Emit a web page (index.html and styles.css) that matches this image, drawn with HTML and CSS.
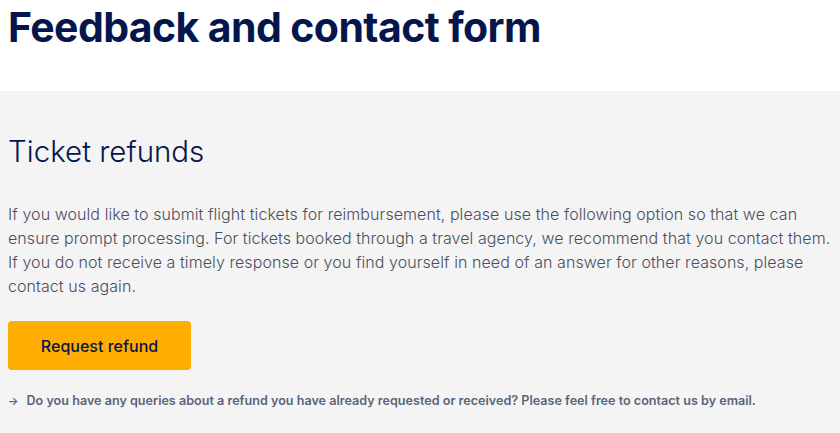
FILE: index.html
```html
<!DOCTYPE html>
<html lang="en">
<head>
<meta charset="utf-8">
<title>Feedback and contact form</title>
<link rel="stylesheet" href="styles.css">
</head>
<body>
<header class="page-head">
  <h1 class="page-title">Feedback and contact form</h1>
</header>
<main class="section">
  <h2 class="section-title">Ticket refunds</h2>
  <p class="section-text">If you would like to submit flight tickets for reimbursement, please use the following option so that we can ensure prompt processing. For tickets booked through a travel agency, we recommend that you contact them. If you do not receive a timely response or you find yourself in need of an answer for other reasons, please contact us again.</p>
  <button class="btn-primary" type="button">Request refund</button>
  <p class="hint"><span class="hint-arrow">&#8594;</span>Do you have any queries about a refund you have already requested or received? Please feel free to contact us by email.</p>
</main>
</body>
</html>
```
FILE: styles.css
```css
html, body {
  margin: 0;
  padding: 0;
}
body {
  width: 840px;
  height: 433px;
  overflow: hidden;
  background: #f4f4f4;
  font-family: Inter, "Noto Sans", sans-serif;
  color: #05164d;
}
.page-head {
  background: #ffffff;
  height: 91px;
  padding: 0 8px;
  box-sizing: border-box;
}
.page-title {
  margin: 0;
  padding-top: 3px;
  font-size: 41px;
  line-height: 48px;
  font-weight: 700;
  letter-spacing: -0.6px;
  color: #05164d;
}
.section {
  padding: 0 8px;
}
.section-title {
  margin: 0;
  padding-top: 40px;
  font-size: 29.5px;
  line-height: 40px;
  font-weight: 300;
  color: #05164d;
}
.section-text {
  margin: 31px 0 0;
  font-size: 16px;
  line-height: 24px;
  font-weight: 300;
  letter-spacing: 0.07px;
  color: #4b4f5c;
}
.btn-primary {
  margin-top: 23px;
  width: 183px;
  height: 49px;
  border: 0;
  border-radius: 4px;
  background: #ffad00;
  color: #05164d;
  font-family: inherit;
  font-size: 16px;
  font-weight: 500;
  display: block;
}
.hint {
  margin: 23px 0 0;
  font-size: 12.6px;
  line-height: 16px;
  font-weight: 600;
  color: #5b6479;
  display: flex;
  align-items: center;
}
.hint-arrow {
  margin-right: 8px;
  font-size: 11px;
}
```
